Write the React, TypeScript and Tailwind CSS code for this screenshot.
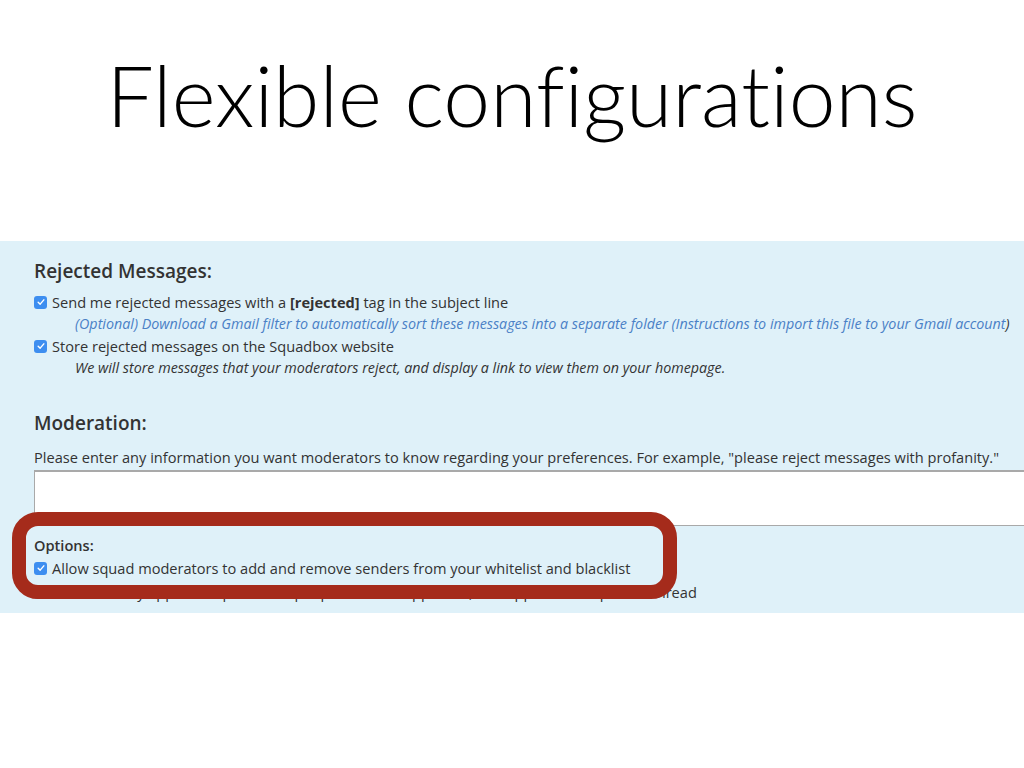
const Check = () => (
  <span className="inline-flex w-[13px] h-[13px] shrink-0 items-center justify-center rounded-[3px] bg-[#3d8ef0] mr-[5px]">
    <svg viewBox="0 0 12 12" className="w-[10px] h-[10px]">
      <path
        d="M2.6 6.3 L5 8.6 L9.4 3.4"
        fill="none"
        stroke="white"
        strokeWidth="1.7"
        strokeLinecap="round"
        strokeLinejoin="round"
      />
    </svg>
  </span>
);

export default function App() {
  return (
    <div className="w-[1024px] h-[768px] bg-white overflow-hidden font-['Open_Sans',sans-serif]">
      {/* Slide title */}
      <div className="h-[241px] flex justify-center pt-[43px]">
        <h1 className="font-['Lato',sans-serif] font-light text-[84px] leading-[104px] text-black [font-variant-ligatures:none]">
          Flexible configurations
        </h1>
      </div>

      {/* Screenshot of settings panel */}
      <section className="relative h-[372px] bg-[#dff1f9] pl-[34px] pt-[18px] text-[#333] overflow-hidden">
        <h2 className="text-[19px] leading-[24px] font-semibold">Rejected Messages:</h2>

        <div className="mt-[8px] text-[14.6px] leading-[22px]">
          <label className="flex items-center">
            <Check />
            <span>
              Send me rejected messages with a <b>[rejected]</b> tag in the subject line
            </span>
          </label>
          <p className="pl-[41px] italic text-[14.3px] text-[#4a80c6] whitespace-nowrap">
            (Optional) Download a Gmail filter to automatically sort these messages into a separate folder (Instructions to import this file to your Gmail account<span className="text-[#333]">)</span>
          </p>
          <label className="flex items-center">
            <Check />
            <span>Store rejected messages on the Squadbox website</span>
          </label>
          <p className="pl-[41px] italic text-[14.3px]">
            We will store messages that your moderators reject, and display a link to view them on your homepage.
          </p>
        </div>

        <h2 className="mt-[31px] text-[19px] leading-[26px] font-semibold">Moderation:</h2>
        <p className="mt-[10px] text-[14.6px] leading-[22px] whitespace-nowrap">
          Please enter any information you want moderators to know regarding your preferences. For example, "please reject messages with profanity."
        </p>
        <div className="mt-[2px] w-[1010px] h-[56px] bg-white border-t-2 border-b border-l border-[#a9a9a9]" />

        <h3 className="mt-[9px] text-[14.6px] leading-[20px] font-semibold">Options:</h3>
        <div className="mt-[2px] text-[14.6px] leading-[22px]">
          <label className="flex items-center">
            <Check />
            <span>Allow squad moderators to add and remove senders from your whitelist and blacklist</span>
          </label>
          <label className="mt-[2px] flex items-center">
            <Check />
            <span>Automatically approve replies from people who are approved, and approve all replies in thread</span>
          </label>
        </div>

        {/* Red highlight */}
        <div className="absolute left-[12px] top-[271px] w-[665px] h-[87px] border-[14px] border-[#a52b1b] rounded-[26px]" />
      </section>
    </div>
  );
}
